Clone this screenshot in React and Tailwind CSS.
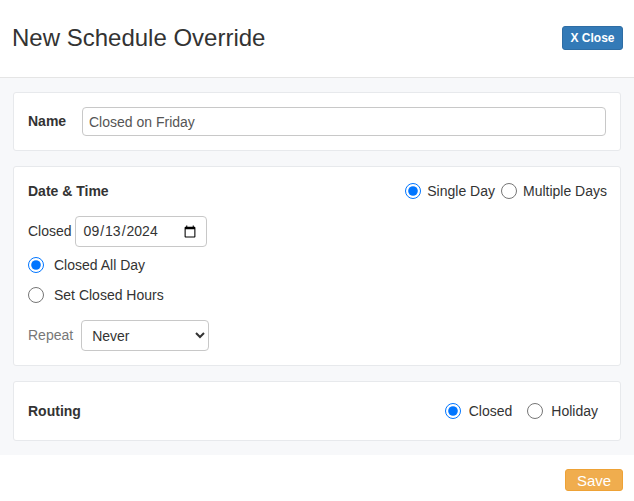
import { useState } from "react";

function Radio({ name, label, checked, onChange, className = "" }) {
  return (
    <label className={`flex items-center gap-[6px] cursor-pointer ${className}`}>
      <input
        type="radio"
        name={name}
        checked={checked}
        onChange={onChange}
        className="w-4 h-4 m-0 accent-[#0075ff]"
      />
      <span>{label}</span>
    </label>
  );
}

export default function App() {
  const [name, setName] = useState("Closed on Friday");
  const [span, setSpan] = useState("single");
  const [allDay, setAllDay] = useState(true);
  const [route, setRoute] = useState("closed");

  return (
    <div className="w-[634px] h-[501px] bg-white text-[#333] text-[14px] font-['Liberation_Sans',Arial,sans-serif]">
      {/* header */}
      <div className="h-[78px] flex items-center justify-between px-[12px] border-b border-[#e5e5e5]">
        <h1 className="text-[24px] leading-none pb-[2px]">New Schedule Override</h1>
        <button className="w-[61px] h-[24px] mr-[-1px] mt-[-1px] rounded-[3px] bg-[#337ab7] border border-[#2e6da4] text-white text-[12px] font-bold">
          X Close
        </button>
      </div>

      {/* body */}
      <div className="bg-[#f7f8fa] px-[13px] py-[14px] flex flex-col gap-[15px]">
        <div className="bg-white border border-[#e7e9ec] rounded-[3px] p-[14px] flex items-center">
          <span className="font-bold w-[54px]">Name</span>
          <input
            value={name}
            onChange={(e) => setName(e.target.value)}
            className="flex-1 h-[29px] px-[6px] border border-[#c8c8c8] rounded-[4px] text-[#555] outline-none"
          />
        </div>

        <div className="bg-white border border-[#e7e9ec] rounded-[3px] p-[14px]">
          <div className="flex items-center justify-between h-[20px]">
            <span className="font-bold">Date &amp; Time</span>
            <div className="flex items-center gap-[6px] mr-[-1px]">
              <Radio name="span" label="Single Day" checked={span === "single"} onChange={() => setSpan("single")} className="gap-[4px]" />
              <Radio name="span" label="Multiple Days" checked={span === "multi"} onChange={() => setSpan("multi")} className="gap-[4px]" />
            </div>
          </div>

          <div className="flex items-center mt-[15px]">
            <span className="mr-[3px]">Closed</span>
            <input
              type="date"
              defaultValue="2024-09-13"
              className="w-[132px] h-[31px] px-[7px] border border-[#c8c8c8] rounded-[4px] text-[#333]"
            />
          </div>

          <div className="mt-[3px]">
            <Radio name="hours" label="Closed All Day" checked={allDay} onChange={() => setAllDay(true)} className="h-[30px] gap-[10px]" />
            <Radio name="hours" label="Set Closed Hours" checked={!allDay} onChange={() => setAllDay(false)} className="h-[30px] gap-[10px]" />
          </div>

          <div className="flex items-center mt-[10px]">
            <span className="text-[#777] mr-[8px]">Repeat</span>
            <select className="w-[128px] h-[31px] px-[6px] border border-[#c8c8c8] rounded-[4px] text-[#333] bg-white">
              <option>Never</option>
              <option>Weekly</option>
              <option>Yearly</option>
            </select>
          </div>
        </div>

        <div className="bg-white border border-[#e7e9ec] rounded-[3px] p-[14px] h-[60px] flex items-center justify-between">
          <span className="font-bold">Routing</span>
          <div className="flex items-center gap-[15px] mr-[8px]">
            <Radio name="route" label="Closed" checked={route === "closed"} onChange={() => setRoute("closed")} className="gap-[8px]" />
            <Radio name="route" label="Holiday" checked={route === "holiday"} onChange={() => setRoute("holiday")} className="gap-[8px]" />
          </div>
        </div>
      </div>

      {/* footer */}
      <div className="flex justify-end px-[11px] pt-[14px]">
        <button className="w-[58px] h-[22px] rounded-[3px] bg-[#f0ad4e] border border-[#eea236] text-white text-[15px] leading-none">
          Save
        </button>
      </div>
    </div>
  );
}
